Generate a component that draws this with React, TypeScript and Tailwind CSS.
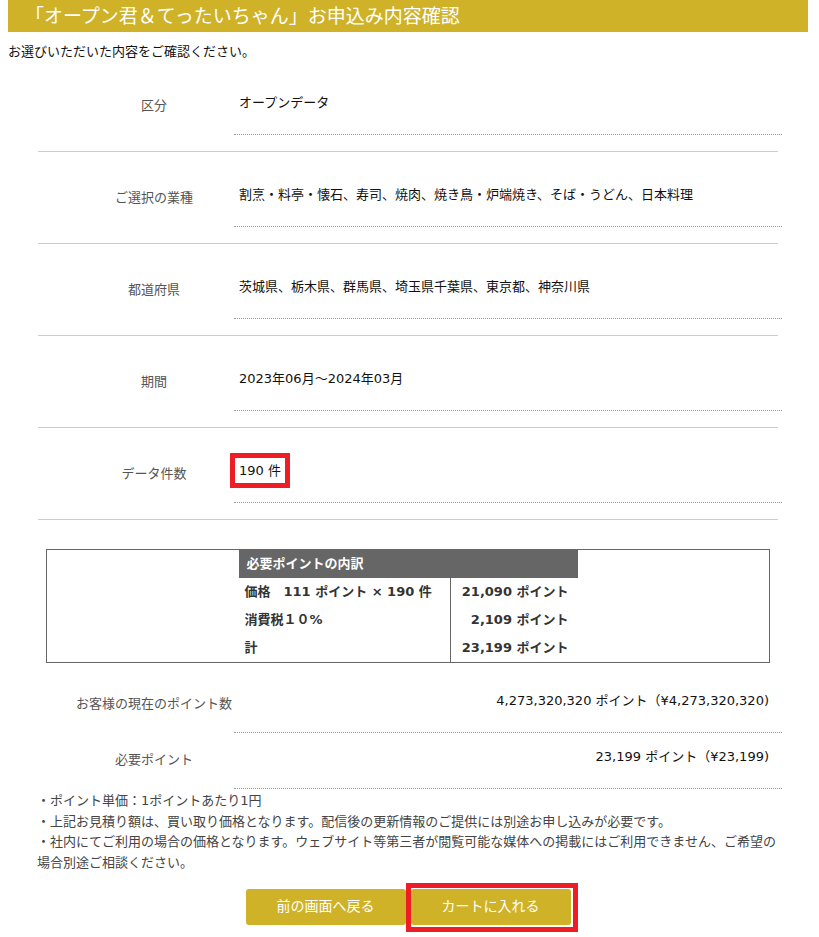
const FONT = '"DejaVu Sans", "Noto Sans CJK JP", sans-serif'

const rows = [
  { label: '区分', value: 'オープンデータ' },
  { label: 'ご選択の業種', value: '割烹・料亭・懐石、寿司、焼肉、焼き鳥・炉端焼き、そば・うどん、日本料理' },
  { label: '都道府県', value: '茨城県、栃木県、群馬県、埼玉県千葉県、東京都、神奈川県' },
  { label: '期間', value: '2023年06月～2024年03月' },
]

function FormRow({ label, children }: { label: string; children: React.ReactNode }) {
  return (
    <div className="flex border-b border-[#ccc]">
      <div className="w-[196px] shrink-0 pl-[36px] pt-[37px] text-center text-[13px] leading-[18px] text-[#555]">
        {label}
      </div>
      <div className="-mr-[4px] flex-1">
        <div className="border-b border-dotted border-[#999] pl-[5px] pt-[34px] pb-[22px] text-[13px] leading-[18px] text-[#111]">
          {children}
        </div>
        <div className="h-[16px]" />
      </div>
    </div>
  )
}

function PointRow({ label, value }: { label: string; value: string }) {
  return (
    <div className="flex">
      <div className="w-[196px] shrink-0 pl-[36px] pt-[18px] text-center text-[13px] leading-[18px] text-[#555] whitespace-nowrap">
        {label}
      </div>
      <div className="-mr-[4px] flex-1 border-b border-dotted border-[#999] pt-[15px] pb-[22px] pr-[13px] text-right text-[13px] leading-[18px] text-[#111]">
        {value}
      </div>
    </div>
  )
}

export default function App() {
  return (
    <div className="min-h-[937px] w-[819px] bg-white pl-[8px] pr-[11px]" style={{ fontFamily: FONT }}>
      <div className="h-[32px] bg-[#cfb227] pl-[17px] text-[19px] leading-[32px] text-white">
        「オープン君＆てったいちゃん」お申込み内容確認
      </div>
      <p className="mt-[12px] text-[13px] leading-[16px] text-[#111]">お選びいただいた内容をご確認ください。</p>

      <div className="mx-[30px]">
        {rows.map((r) => (
          <FormRow key={r.label} label={r.label}>
            {r.value}
          </FormRow>
        ))}
        <FormRow label="データ件数">
          <span className="relative inline-block">
            190 件
            <span className="absolute -left-[9px] -top-[9px] h-[35px] w-[60px] border-[5px] border-[#ee1c25]" />
          </span>
        </FormRow>

        {/* 内訳 */}
        <div className="mx-[8px] mt-[29px] flex justify-center border border-[#666]">
          <table className="w-[339px] border-collapse text-[13px] font-bold text-[#333]">
            <tbody>
              <tr className="h-[28px] bg-[#666] text-white">
                <td colSpan={2} className="pl-[8px]">必要ポイントの内訳</td>
              </tr>
              <tr className="h-[28px]">
                <td className="w-[212px] pl-[6px]">価格　111 ポイント × 190 件</td>
                <td className="border-l border-[#666] pr-[9px] text-right">21,090 ポイント</td>
              </tr>
              <tr className="h-[28px]">
                <td className="pl-[6px]">消費税１０%</td>
                <td className="border-l border-[#666] pr-[9px] text-right">2,109 ポイント</td>
              </tr>
              <tr className="h-[28px]">
                <td className="pl-[6px]">計</td>
                <td className="border-l border-[#666] pr-[9px] text-right">23,199 ポイント</td>
              </tr>
            </tbody>
          </table>
        </div>

        <div className="mt-[14px]">
          <PointRow label="お客様の現在のポイント数" value="4,273,320,320 ポイント（¥4,273,320,320)" />
          <PointRow label="必要ポイント" value="23,199 ポイント（¥23,199)" />
        </div>
      </div>

      <div className="ml-[29px] mt-[2px] w-[760px] text-[13px] leading-[20.7px] text-[#444]">
        <p>・ポイント単価：1ポイントあたり1円</p>
        <p>・上記お見積り額は、買い取り価格となります。配信後の更新情報のご提供には別途お申し込みが必要です。</p>
        <p>
          ・社内にてご利用の場合の価格となります。ウェブサイト等第三者が閲覧可能な媒体への掲載にはご利用できません、ご希望の
          <br />
          場合別途ご相談ください。
        </p>
      </div>

      <div className="mt-[15px] flex justify-center gap-[5px]">
        <button className="h-[36px] w-[160px] rounded-[3px] bg-[#cfb227] text-[14px] text-white">前の画面へ戻る</button>
        <div className="relative">
          <button className="h-[36px] w-[160px] rounded-[3px] bg-[#cfb227] text-[14px] text-white">カートに入れる</button>
          <span className="pointer-events-none absolute -left-[5px] -right-[7px] -top-[6px] -bottom-[7px] border-[5px] border-[#ee1c25]" />
        </div>
      </div>
    </div>
  )
}
